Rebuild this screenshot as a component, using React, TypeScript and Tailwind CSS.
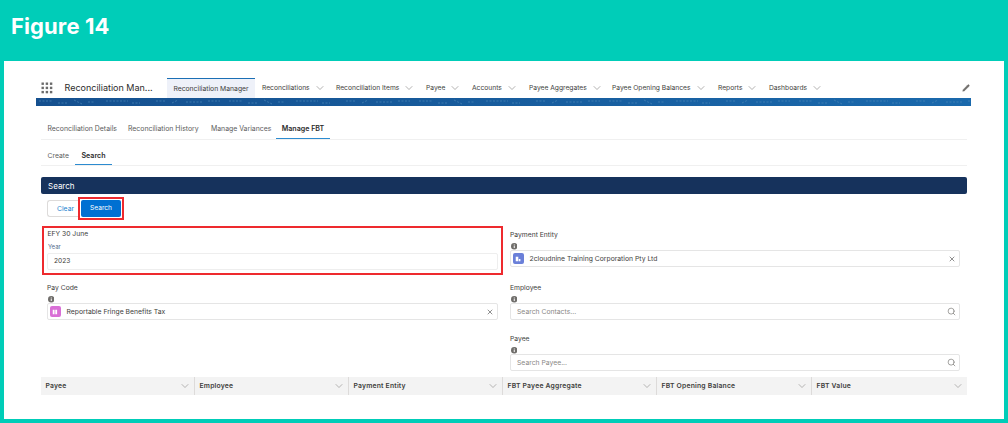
import React from "react";
import { ChevronDown, Search, X, Pencil } from "lucide-react";

const F = "font-['Inter','Liberation_Sans',sans-serif]";

function NavItem({ label, w }: { label: string; w: string }) {
  return (
    <div className={`flex items-center ${w} shrink-0`}>
      <span className="pt-[1px] text-[6.7px] text-[#3e3e3c] whitespace-nowrap">{label}</span>
      <ChevronDown className="ml-[4px] w-[12px] h-[12px] text-[#8a8886]" strokeWidth={1.3} />
    </div>
  );
}

function Info() {
  return (
    <svg viewBox="0 0 8 8" className="w-[6.5px] h-[6.5px] block">
      <circle cx="4" cy="4" r="4" fill="#706e6b" />
      <rect x="3.4" y="3.4" width="1.2" height="2.8" fill="#fff" />
      <rect x="3.4" y="1.8" width="1.2" height="1.1" fill="#fff" />
    </svg>
  );
}

function Label({ children }: { children: React.ReactNode }) {
  return <div className="text-[6.75px] leading-[10px] text-[#3e3e3c]">{children}</div>;
}

function Field({ label, children, cls }: { label: string; children: React.ReactNode; cls: string }) {
  return (
    <div className={cls}>
      <Label>{label}</Label>
      <div className="mt-[3px] h-[7px] pl-[0.5px]"><Info /></div>
      {children}
    </div>
  );
}

function Pill({ color, text, kind }: { color: string; text: string; kind: "a" | "b" }) {
  return (
    <div className="h-[17px] flex items-center border border-[#e5e5e5] rounded-[2px] bg-white pl-[2px] pr-[3.5px]">
      <div className={`w-[10.5px] h-[10.5px] rounded-[2px] ${color} flex items-center justify-center`}>
        {kind === "a" ? (
          <svg viewBox="0 0 8 8" className="w-[6px] h-[6px]"><rect x="1" y="1" width="2.4" height="6" fill="#fff" /><rect x="4.4" y="1" width="2.4" height="6" fill="#fff" /></svg>
        ) : (
          <svg viewBox="0 0 8 8" className="w-[6px] h-[6px]"><rect x="1" y="1" width="3.4" height="6" fill="#fff" /><rect x="5" y="4" width="2.2" height="3" fill="#fff" /></svg>
        )}
      </div>
      <span className="ml-[6px] pt-[1px] text-[6.8px] text-[#3e3e3c]">{text}</span>
      <X className="ml-auto w-[8px] h-[8px] text-[#444]" strokeWidth={1.8} />
    </div>
  );
}

function SearchBox({ placeholder }: { placeholder: string }) {
  return (
    <div className="h-[17px] flex items-center border border-[#e5e5e5] rounded-[2px] bg-white pl-[6px] pr-[3px]">
      <span className="pt-[2px] text-[6.8px] text-[#8a8886]">{placeholder}</span>
      <Search className="ml-auto w-[9px] h-[9px] text-[#706e6b]" strokeWidth={1.7} />
    </div>
  );
}

function Th({ label, cls }: { label: string; cls: string }) {
  return (
    <div className={`${cls} flex items-center justify-between pl-[4.5px] pr-[3.5px] border-r border-[#dddbda]`}>
      <span className="pt-[1px] text-[6.8px] font-semibold text-[#3e3e3c] tracking-[0.2px] whitespace-nowrap">{label}</span>
      <ChevronDown className="w-[12px] h-[12px] text-[#8a8886]" strokeWidth={1.2} />
    </div>
  );
}

export default function App() {
  return (
    <div className={`${F} w-[1008px] h-[423px] bg-[#00cdb8] flex flex-col overflow-hidden`}>
      <div className="h-[61px] shrink-0 pl-[11px] pt-[12px]">
        <div className="text-[22px] leading-[28px] font-bold text-white tracking-[0.1px]">Figure 14</div>
      </div>
      <div className="ml-[4px] w-[1000px] h-[358px] bg-white pt-[17px] flex flex-col">
        {/* nav */}
        <div className="ml-[32px] w-[935px] h-[20px] flex items-center">
          <svg viewBox="0 0 12 12" className="ml-[5px] w-[12px] h-[12px] shrink-0">
            {[0.5, 4.7, 8.9].map((y) =>
              [0.5, 4.7, 8.9].map((x) => <rect key={`${x}-${y}`} x={x} y={y} width="2.4" height="2.4" fill="#6b6b6b" />)
            )}
          </svg>
          <span className="ml-[11.5px] w-[102.5px] shrink-0 text-[9px] text-[#2b2b2b] whitespace-nowrap">Reconciliation Man...</span>
          <div className="w-[88px] h-[20px] shrink-0 bg-[#eef1f9] border-t border-[#1b6fb5] flex items-center justify-center pt-[1px] text-[6.8px] text-[#3e3e3c] whitespace-nowrap">
            Reconciliation Manager
          </div>
          <div className="ml-[7px] flex items-center">
            <NavItem label="Reconciliations" w="w-[74px]" />
            <NavItem label="Reconciliation Items" w="w-[90px]" />
            <NavItem label="Payee" w="w-[46px]" />
            <NavItem label="Accounts" w="w-[57px]" />
            <NavItem label="Payee Aggregates" w="w-[83px]" />
            <NavItem label="Payee Opening Balances" w="w-[106px]" />
            <NavItem label="Reports" w="w-[51px]" />
            <NavItem label="Dashboards" w="w-[60px]" />
          </div>
          <Pencil className="ml-auto mr-[1px] w-[8px] h-[8px] text-[#706e6b]" fill="#706e6b" strokeWidth={1} />
        </div>
        {/* banner */}
        <div className="ml-[32px] w-[935px] h-[8px] bg-gradient-to-r from-[#15508f] to-[#1a69ac] overflow-hidden">
          <svg width="935" height="8" className="block">
            <defs>
              <pattern id="bn" width="190" height="8" patternUnits="userSpaceOnUse">
                <path d="M3 3h14M22 5h10M38 2l8 4M52 4h6M70 3h22M96 5h8M120 3h10M136 5l6-3M150 4h16M172 3h12" stroke="#4a86b8" strokeWidth="0.7" strokeDasharray="2 1.5" fill="none" />
              </pattern>
            </defs>
            <rect width="935" height="8" fill="url(#bn)" />
          </svg>
        </div>
        {/* tabs */}
        <div className="ml-[37px] w-[926px] h-[34px] border-b border-[#f0f0f0] flex items-end">
          <div className="pl-[6.5px] pb-[5px] text-[6.9px] text-[#5c5c5c] w-[87px] whitespace-nowrap">Reconciliation Details</div>
          <div className="pb-[5px] text-[6.9px] text-[#5c5c5c] w-[83px] whitespace-nowrap">Reconciliation History</div>
          <div className="pb-[5px] text-[6.9px] text-[#5c5c5c] w-[65px] whitespace-nowrap">Manage Variances</div>
          <div className="h-[20px] w-[54px] pt-[2px] border-b border-[#2c8bd0] flex items-center justify-center text-[7.1px] font-semibold text-[#2b2b2b] whitespace-nowrap">Manage FBT</div>
        </div>
        <div className="ml-[37px] w-[926px] h-[26px] border-b border-[#f0f0f0] flex items-end">
          <div className="pl-[6.5px] pb-[4px] text-[6.8px] text-[#5c5c5c] w-[34px]">Create</div>
          <div className="h-[20px] w-[37px] pt-[3px] border-b border-[#2c8bd0] flex items-center justify-center text-[7.1px] font-semibold text-[#2b2b2b]">Search</div>
        </div>
        {/* section header */}
        <div className="ml-[37px] mt-[11px] w-[926px] h-[17px] bg-[#16325c] rounded-[2px] flex items-center pl-[7px] text-[8px] text-white">Search</div>
        {/* buttons */}
        <div className="ml-[43px] mt-[6px] h-[17px] flex items-center">
          <div className="w-[31px] h-[17px] pt-[1px] border border-[#dddbda] border-r-0 rounded-l-[3px] text-[6.8px] text-[#1b7fd0] flex items-center pl-[9px]">Clear</div>
          <div className="w-[46px] h-[23px] -my-[3px] border-2 border-[#ee2a2e] p-[1px] flex">
            <div className="w-full h-full pt-[1px] bg-[#0070d2] rounded-[2px] text-[6.6px] text-white flex items-center justify-center">Search</div>
          </div>
        </div>
        {/* form */}
        <div className="ml-[38px] mt-[9px] flex gap-[7px] items-start">
          <div className="w-[461px] flex flex-col">
            <div className="h-[49px] border-2 border-[#ee2a2e] px-[3px] pt-[1px]">
              <div className="pl-[0.5px]"><Label>EFY 30 June</Label></div>
              <div className="mt-[4px] pl-[1px] text-[6px] leading-[8px] text-[#54698d]">Year</div>
              <div className="mt-[2px] h-[17px] pt-[1px] border border-[#eeeeee] rounded-[2px] flex items-center pl-[6px] text-[6.6px] text-[#3e3e3c]">2023</div>
            </div>
            <Field label="Pay Code" cls="mt-[8px] mx-[5px]">
              <Pill color="bg-[#d96fd6]" text="Reportable Fringe Benefits Tax" kind="a" />
            </Field>
          </div>
          <div className="w-[450px] pt-[4px]">
            <Field label="Payment Entity" cls="">
              <Pill color="bg-[#6b80d9]" text="2cloudnine Training Corporation Pty Ltd" kind="b" />
            </Field>
            <Field label="Employee" cls="mt-[16px]">
              <SearchBox placeholder="Search Contacts..." />
            </Field>
            <Field label="Payee" cls="mt-[14px]">
              <SearchBox placeholder="Search Payee..." />
            </Field>
          </div>
        </div>
        {/* table */}
        <div className="ml-[37px] mt-[6px] w-[926px] h-[18px] bg-[#f3f3f3] flex">
          <Th label="Payee" cls="w-[154px]" />
          <Th label="Employee" cls="w-[154px]" />
          <Th label="Payment Entity" cls="w-[154px]" />
          <Th label="FBT Payee Aggregate" cls="w-[154px]" />
          <Th label="FBT Opening Balance" cls="w-[155px]" />
          <Th label="FBT Value" cls="w-[155px] border-r-0" />
        </div>
      </div>
    </div>
  );
}
